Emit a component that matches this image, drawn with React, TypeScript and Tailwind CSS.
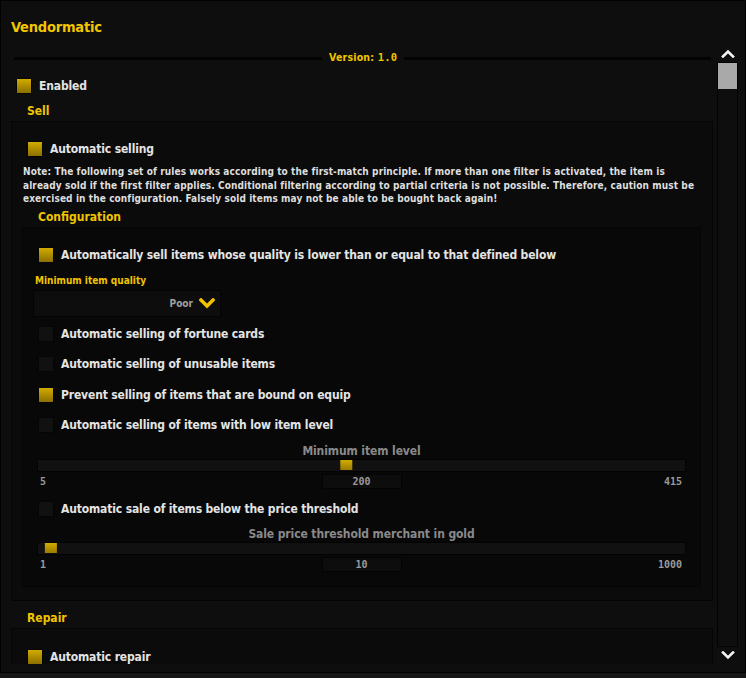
import React from "react";

const FONT = "'DejaVu Sans Condensed', 'Liberation Sans Narrow', 'Roboto', sans-serif";
const MONO = "'DejaVu Sans Mono', 'Liberation Mono', monospace";

function Box({ checked }: { checked?: boolean }) {
  return (
    <div
      className={
        "w-[16px] h-[16px] shrink-0 border border-[#050505] " +
        (checked ? "bg-gradient-to-b from-[#d2ac00] to-[#8c7000]" : "bg-[#111111]")
      }
    />
  );
}

function CheckRow({ checked, label, className }: { checked?: boolean; label: string; className?: string }) {
  return (
    <div className={"flex items-center gap-[7px] " + (className || "")}>
      <Box checked={checked} />
      <span className="text-[12px] font-bold text-[#e4e4e4] tracking-[-0.15px] leading-none whitespace-nowrap">{label}</span>
    </div>
  );
}

function Header({ text, className }: { text: string; className?: string }) {
  return (
    <div className={"h-[20px] flex items-center text-[12px] font-bold text-[#f0c400] tracking-[0px] " + (className || "")}>
      {text}
    </div>
  );
}

function Slider({ label, min, max, value, pct }: { label: string; min: string; max: string; value: string; pct: number }) {
  return (
    <div className="ml-[14px] mr-[14px]">
      <div className="h-[15px] flex items-center justify-center text-[12px] font-bold text-[#8a8a8a] tracking-[-0.1px]">
        {label}
      </div>
      <div className="h-[13px] border border-[#030303] bg-[#111111] flex items-center px-[1px]">
        <div className="relative w-full h-[10px]">
          <div
            className="absolute top-0 w-[12px] h-[10px] bg-gradient-to-b from-[#d2ac00] to-[#9a7c00]"
            style={{ left: `${pct * 100}%`, transform: `translateX(-${pct * 100}%)` }}
          />
        </div>
      </div>
      <div className="flex items-center justify-between mt-[2px] h-[15px]" style={{ fontFamily: MONO }}>
        <span className="text-[10px] font-bold text-[#9a9a9a] pl-[3px] w-[40px]">{min}</span>
        <div className="w-[80px] h-[15px] border border-[#030303] bg-[#0d0d0d] flex items-center justify-center text-[10px] font-bold text-[#9a9a9a]">
          {value}
        </div>
        <span className="text-[10px] font-bold text-[#9a9a9a] pr-[4px] w-[40px] text-right">{max}</span>
      </div>
    </div>
  );
}

function Chevron({ up, className }: { up?: boolean; className?: string }) {
  return (
    <svg width="14" height="9" viewBox="0 0 14 9" className={className}>
      <polyline
        points={up ? "2,7.5 7,2.5 12,7.5" : "2,1.5 7,6.5 12,1.5"}
        fill="none"
        stroke="#f4f4f4"
        strokeWidth="2.6"
        strokeLinecap="square"
      />
    </svg>
  );
}

export default function App() {
  return (
    <div className="w-[746px] h-[678px] bg-[#171717] overflow-hidden" style={{ fontFamily: FONT }}>
      <div className="w-[746px] h-[673px] border border-[#020202] bg-[#0e0e0e] flex flex-col">
        <div className="h-[43px] pl-[10px] pt-[16px]">
          <div className="text-[14.5px] font-bold text-[#f2c500] tracking-[-0.2px] leading-[20px]">Vendormatic</div>
        </div>
        <div className="flex h-[620px] overflow-hidden">
          <div className="ml-[10px] w-[702px] shrink-0">
            {/* version */}
            <div className="h-[28px] flex items-center">
              <div className="ml-[3px] w-[308px] h-[3px] bg-[#030303]" />
              <div className="mx-[7px] text-[10.5px] font-bold text-[#f2c500] tracking-[0.2px] whitespace-nowrap">
                Version: <span style={{ fontFamily: MONO }}>1.0</span>
              </div>
              <div className="flex-1 h-[3px] bg-[#030303] mr-[2px]" />
            </div>
            <CheckRow checked label="Enabled" className="ml-[5px] mt-[6px]" />
            <Header text="Sell" className="mt-[7px] pl-[16px]" />
            <div className="border border-[#050505] bg-[#0b0b0b] h-[480px]">
              <CheckRow checked label="Automatic selling" className="ml-[15px] mt-[19px]" />
              <div className="ml-[11px] mt-[8px] text-[10px] font-bold text-[#dedede] leading-[13.5px] tracking-[0.1px] whitespace-nowrap">
                <div>Note: The following set of rules works according to the first-match principle. If more than one filter is activated, the item is</div>
                <div>already sold if the first filter applies. Conditional filtering according to partial criteria is not possible. Therefore, caution must be</div>
                <div>exercised in the configuration. Falsely sold items may not be able to be bought back again!</div>
              </div>
              <Header text="Configuration" className="mt-[1px] pl-[26px]" />
              <div className="ml-[10px] mr-[11px] border border-[#050505] bg-[#080808] h-[360px]">
                <CheckRow checked label="Automatically sell items whose quality is lower than or equal to that defined below" className="ml-[15px] mt-[19px]" />
                <div className="ml-[12px] mt-[12px] h-[12px] flex items-center text-[10px] font-bold text-[#f0c400] tracking-[0px]">
                  Minimum item quality
                </div>
                <div className="ml-[10px] mt-[3px] w-[188px] h-[27px] border border-[#030303] bg-[#0d0d0d] flex items-center justify-end pr-[5px] gap-[6px]">
                  <span className="text-[10px] font-bold text-[#a0a0a0]">Poor</span>
                  <svg width="16" height="11" viewBox="0 0 16 11">
                    <polyline points="2,2 8,8 14,2" fill="none" stroke="#f2c200" strokeWidth="3.4" strokeLinecap="square" />
                  </svg>
                </div>
                <CheckRow label="Automatic selling of fortune cards" className="ml-[15px] mt-[9px]" />
                <CheckRow label="Automatic selling of unusable items" className="ml-[15px] mt-[14px]" />
                <CheckRow checked label="Prevent selling of items that are bound on equip" className="ml-[15px] mt-[15px]" />
                <CheckRow label="Automatic selling of items with low item level" className="ml-[15px] mt-[14px]" />
                <div className="mt-[11px]">
                  <Slider label="Minimum item level" min="5" max="415" value="200" pct={(200 - 5) / 410} />
                </div>
                <CheckRow label="Automatic sale of items below the price threshold" className="ml-[15px] mt-[12px]" />
                <div className="mt-[10px]">
                  <Slider label="Sale price threshold merchant in gold" min="1" max="1000" value="10" pct={9 / 999} />
                </div>
              </div>
            </div>
            <Header text="Repair" className="mt-[7px] pl-[16px]" />
            <div className="border border-[#050505] bg-[#0b0b0b] h-[80px]">
              <CheckRow checked label="Automatic repair" className="ml-[15px] mt-[20px]" />
            </div>
          </div>
          <div className="ml-[4px] w-[21px] flex flex-col items-center">
            <div className="h-[18px] flex items-center justify-center">
              <Chevron up />
            </div>
            <div className="w-[21px] h-[585px] border border-[#030303] bg-[#0e0e0e]">
              <div className="w-full h-[26px] bg-[#a9a9a9]" />
            </div>
            <div className="h-[17px] flex items-center justify-center">
              <Chevron />
            </div>
          </div>
        </div>
      </div>
    </div>
  );
}
